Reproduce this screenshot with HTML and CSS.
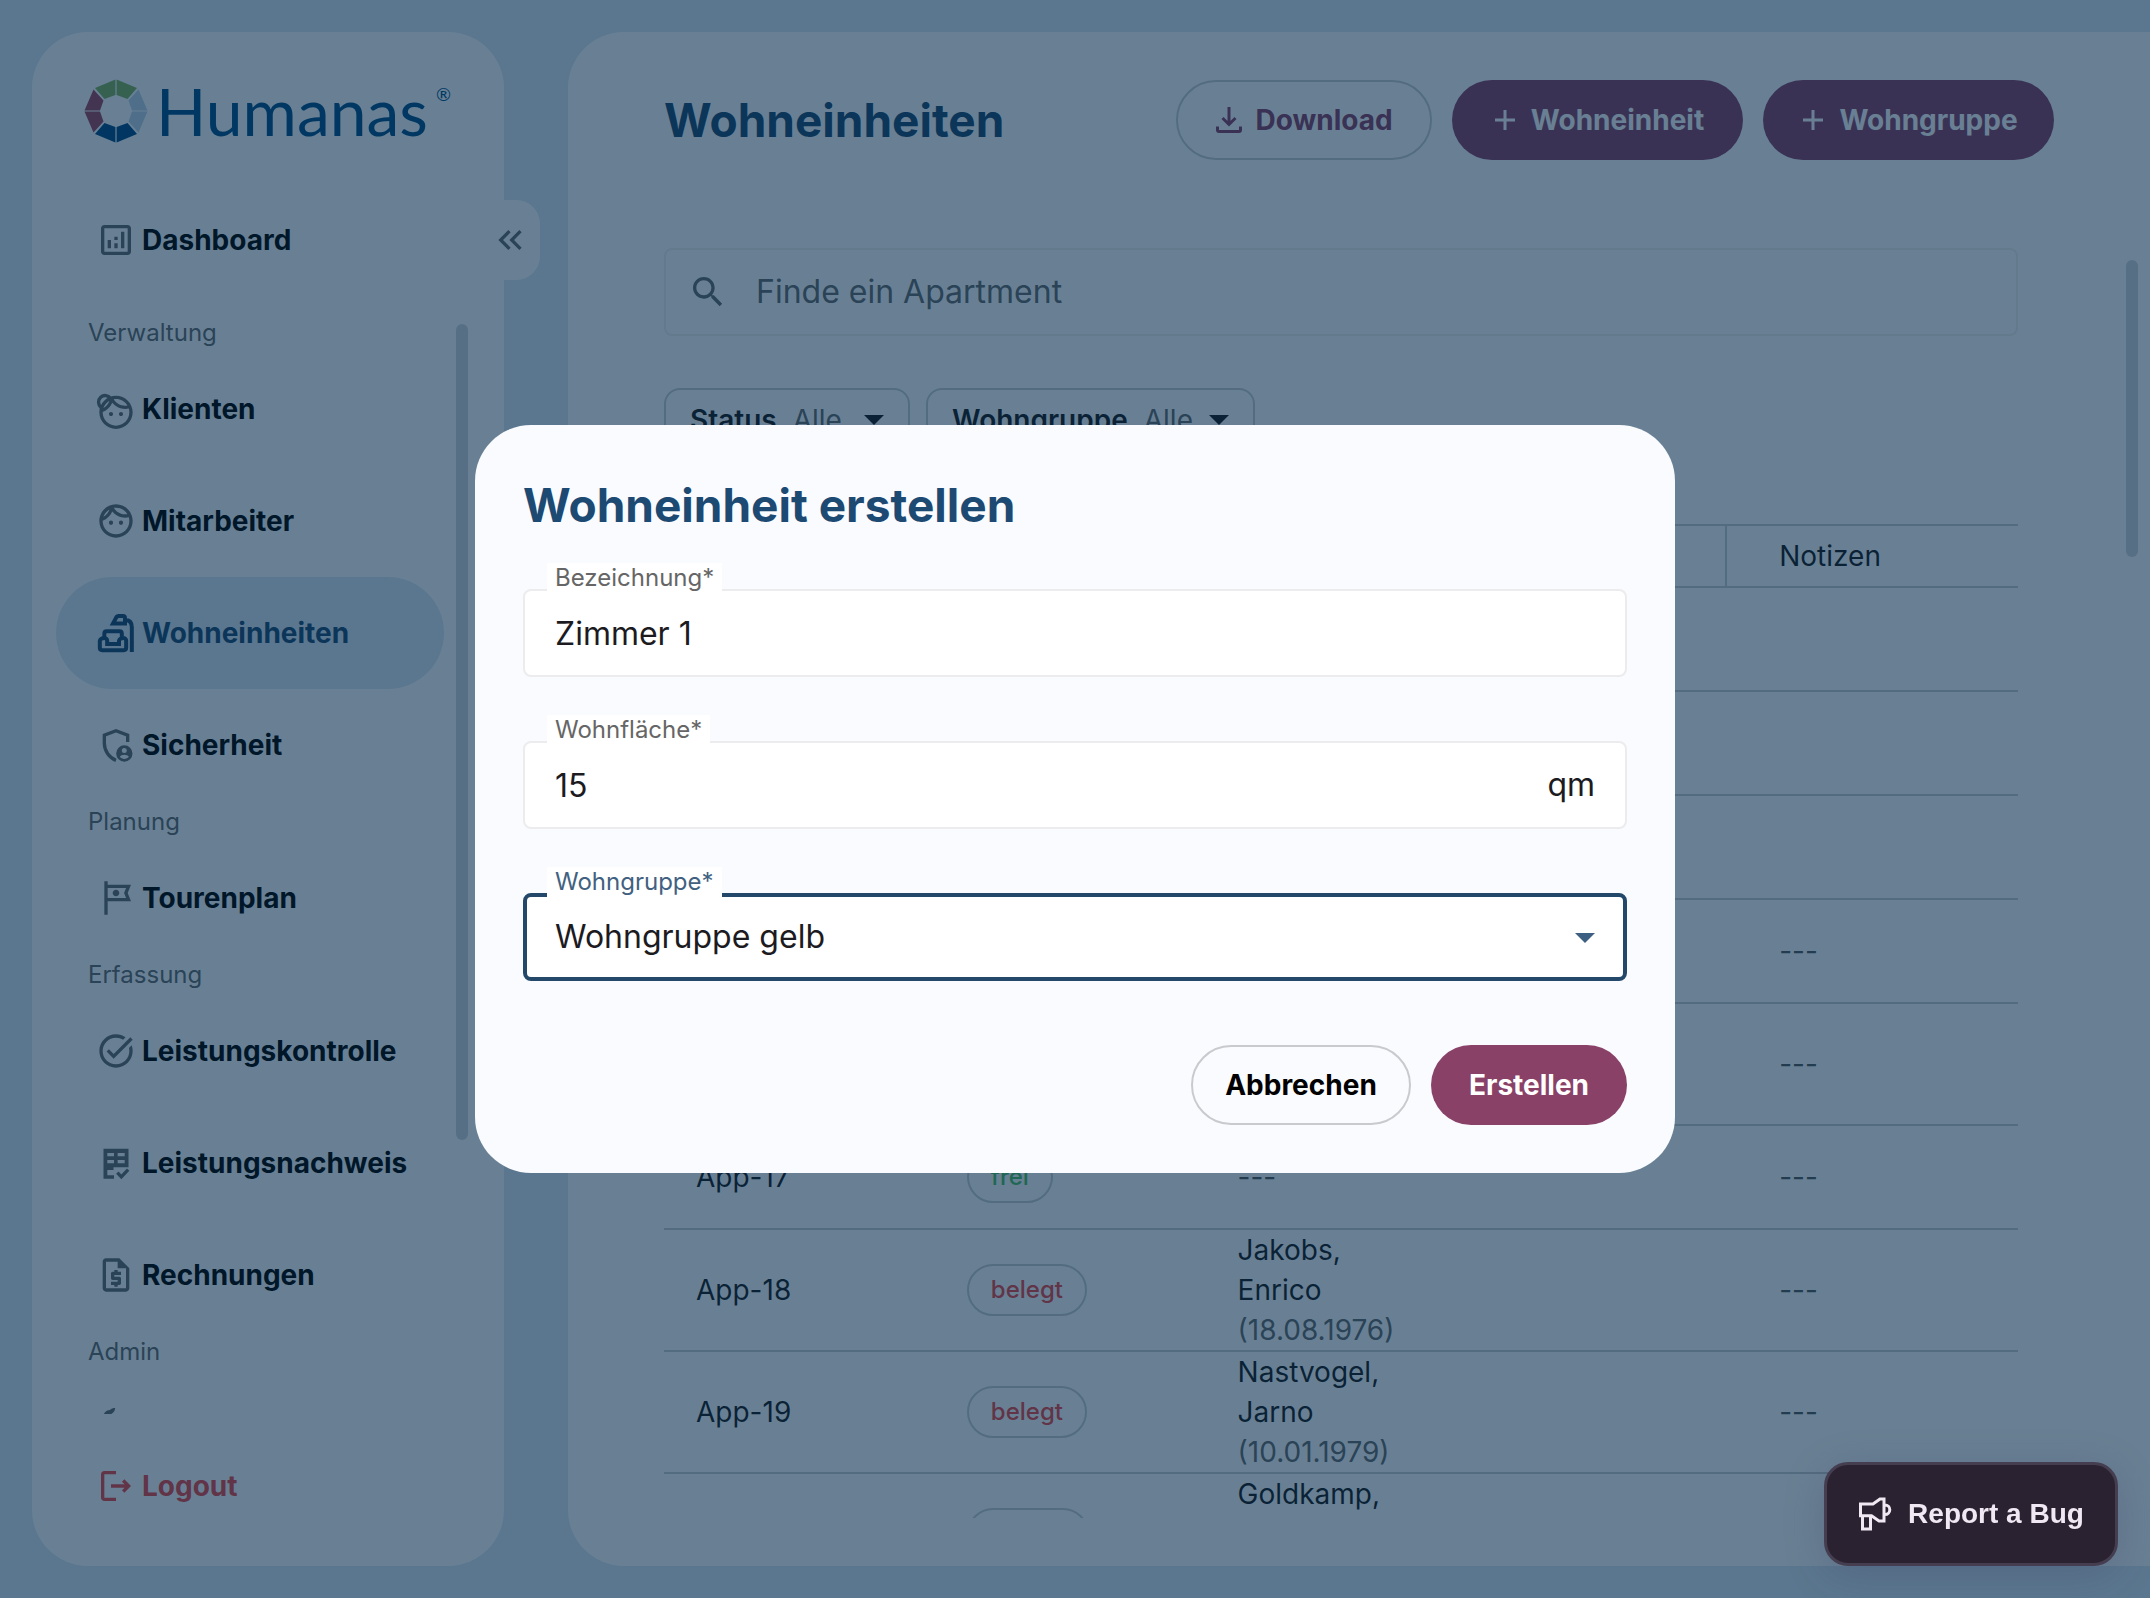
FILE: index.html
```html
<!DOCTYPE html>
<html lang="de">
<head>
<meta charset="utf-8">
<meta name="viewport" content="width=device-width, initial-scale=1">
<title>Humanas – Wohneinheiten</title>
<link rel="stylesheet" href="styles.css">
</head>
<body>
<div class="app">
  <aside class="sidebar">
    <a class="logo" href="#" aria-label="Humanas">
      <svg class="logo-ring" viewBox="0 0 64 64" aria-hidden="true">
        <path class="ring-green" d="M32.600.5 53 9 43.500 20 32.600 16zM31.400.5 11 9l9.500 11L31.400 16z"/>
        <path class="ring-sky" d="M54.500 10.500 63.500 31.400H48L44.500 21.500zM54.500 53.500 63.500 32.600H48L44.500 42.500z"/>
        <path class="ring-navy" d="M32.600 63.500 53 55 43.500 44 32.600 48zM31.400 63.500 11 55l9.500-11L31.400 48z"/>
        <path class="ring-wine" d="M9.500 10.500.5 31.400H16L19.500 21.500zM9.500 53.500.5 32.600H16L19.500 42.500z"/>
      </svg>
      <span class="logo-name">Humanas</span><span class="logo-mark">®</span>
    </a>
    <a class="nav-item" href="#">
      <svg class="icon" viewBox="0 0 24 24"><path d="M19 3H5c-1.100 0-2 .9-2 2v14c0 1.100.9 2 2 2h14c1.100 0 2-.9 2-2V5c0-1.100-.9-2-2-2zm0 16H5V5h14v14zM7 12h2v5H7zM15 7h2v10h-2zM11 14h2v3h-2zM11 10h2v2h-2z"/></svg>
      Dashboard
    </a>
    <button class="collapse" type="button" aria-label="Menü einklappen">
      <svg class="icon" viewBox="0 0 24 24"><path d="M17.590 18 19 16.590 14.420 12 19 7.410 17.590 6l-6 6zM11 18l1.410-1.410L7.830 12l4.580-4.590L11 6l-6 6z"/></svg>
    </button>
    <nav class="nav-scroll">
      <h2 class="nav-label">Verwaltung</h2>
      <a class="nav-item" href="#">
        <svg class="icon" viewBox="0 0 24 24"><g transform="translate(0 2)"><path d="M10.250 13c0 .69-.56 1.250-1.250 1.250S7.750 13.690 7.750 13s.56-1.250 1.250-1.250 1.250.56 1.250 1.250zM15 11.750c-.69 0-1.250.56-1.250 1.250s.56 1.250 1.250 1.250 1.250-.56 1.250-1.250-.56-1.250-1.250-1.250zm7 .25c0 5.520-4.480 10-10 10S2 17.520 2 12 6.480 2 12 2s10 4.480 10 10zM10.660 4.120C12.060 6.440 14.600 8 17.500 8c.46 0 .91-.05 1.340-.12C17.440 5.560 14.900 4 12 4c-.46 0-.91.05-1.340.12zM4.420 9.470c1.710-.97 3.030-2.550 3.660-4.440C6.370 6 5.050 7.580 4.420 9.470zM20 12c0-.78-.12-1.530-.33-2.240-.7.15-1.420.24-2.170.24-3.130 0-5.920-1.440-7.760-3.690C8.690 8.870 6.600 10.880 4 11.860c.01.04 0 .09 0 .14 0 4.410 3.590 8 8 8s8-3.590 8-8z"/></g><path class="line" d="M3 11A4 4 0 1 1 8.800 5.600"/></svg>
        Klienten
      </a>
      <a class="nav-item" href="#">
        <svg class="icon" viewBox="0 0 24 24"><path d="M10.250 13c0 .69-.56 1.250-1.250 1.250S7.750 13.690 7.750 13s.56-1.250 1.250-1.250 1.250.56 1.250 1.250zM15 11.750c-.69 0-1.250.56-1.250 1.250s.56 1.250 1.250 1.250 1.250-.56 1.250-1.250-.56-1.250-1.250-1.250zm7 .25c0 5.520-4.480 10-10 10S2 17.520 2 12 6.480 2 12 2s10 4.480 10 10zM10.660 4.120C12.060 6.440 14.600 8 17.500 8c.46 0 .91-.05 1.340-.12C17.440 5.560 14.900 4 12 4c-.46 0-.91.05-1.340.12zM4.420 9.470c1.710-.97 3.030-2.550 3.660-4.440C6.370 6 5.050 7.580 4.420 9.470zM20 12c0-.78-.12-1.530-.33-2.240-.7.15-1.420.24-2.170.24-3.130 0-5.920-1.440-7.760-3.690C8.690 8.870 6.600 10.880 4 11.860c.01.04 0 .09 0 .14 0 4.410 3.590 8 8 8s8-3.590 8-8z"/></svg>
        Mitarbeiter
      </a>
      <a class="nav-item active" href="#" aria-current="page">
        <svg class="icon" viewBox="0 0 24 24"><path class="line" d="M10.200 6.300h7.200V3c0-.8-.5-1.200-1.200-1.200h-2.600c-.8 0-1.200.3-1.500 1zM17.400 4.200c2.800 0 4.100 1.400 4.100 4.300v14.900M5 15v-2.600c0-.9.500-1.400 1.400-1.400h7.700c.9 0 1.400.5 1.400 1.400V15M6.700 18.600v-1.900c0-1-.8-1.700-1.800-1.700s-2.600.7-2.600 1.700v4.200c0 .9.500 1.400 1.400 1.400h13c.9 0 1.400-.5 1.400-1.400v-4.200c0-1-.8-1.700-1.800-1.700s-2.500.7-2.500 1.700v1.900z"/></svg>
        Wohneinheiten
      </a>
      <a class="nav-item" href="#">
        <svg class="icon" viewBox="0 0 24 24"><path class="line" d="M19 10.200V6.100l-7-2.700-7 2.700V11c0 4.600 3 8.700 7 10.200"/><path fill-rule="evenodd" d="M17 12.200a4.900 4.900 0 1 0 0 9.800 4.900 4.900 0 0 0 0-9.800zm0 1.600a1.500 1.500 0 1 1 0 3 1.500 1.500 0 0 1 0-3zm0 6.600c-1.100 0-2-.5-2.700-1.300.3-.8 1.700-1.300 2.700-1.300s2.400.5 2.700 1.300c-.7.8-1.600 1.300-2.700 1.300z"/></svg>
        Sicherheit
      </a>
      <h2 class="nav-label">Planung</h2>
      <a class="nav-item" href="#">
        <svg class="icon" viewBox="0 0 24 24"><path d="M21 4H7V2H5v20h2v-8h14l-2-5 2-5zm-3.860 5.740L18.050 12H7V6h11.050l-.91 2.260-.3.740.3.740zM14 9c0 1.100-.9 2-2 2s-2-.9-2-2 .9-2 2-2 2 .9 2 2z"/></svg>
        Tourenplan
      </a>
      <h2 class="nav-label">Erfassung</h2>
      <a class="nav-item" href="#">
        <svg class="icon" viewBox="0 0 24 24"><path d="M22 5.180 10.590 16.600l-4.240-4.240 1.410-1.410 2.830 2.830 10-10L22 5.180zM19.790 10.220c.13.57.21 1.170.21 1.780 0 4.420-3.580 8-8 8s-8-3.580-8-8 3.580-8 8-8c1.580 0 3.040.46 4.280 1.250l1.440-1.440C16.100 2.670 14.130 2 12 2 6.480 2 2 6.480 2 12s4.480 10 10 10 10-4.480 10-10c0-1.190-.22-2.330-.6-3.390l-1.610 1.610z"/></svg>
        Leistungskontrolle
      </a>
      <a class="nav-item" href="#">
        <svg class="icon" viewBox="0 0 24 24"><path fill-rule="evenodd" d="M4.500 3.400h15v11.200h-9v1.600H6.800v3.200h4v2H4.500zM6.800 6v1.900h4V6zM13 6v1.900h4.200V6zM6.800 10.200v1.900h4v-1.900zM13 10.200v1.900h4.200v-1.900z"/><path class="line" d="m12.800 17.800 2.400 2.500 4.100-4.300"/></svg>
        Leistungsnachweis
      </a>
      <a class="nav-item" href="#">
        <svg class="icon" viewBox="0 0 24 24"><path d="M14 2H6c-1.100 0-1.990.9-1.990 2L4 20c0 1.100.89 2 1.990 2H18c1.100 0 2-.9 2-2V8l-6-6zM6 20V4h7v4h5v12H6zm5-1h2v-1h1c.55 0 1-.45 1-1v-3c0-.55-.45-1-1-1h-3v-1h4v-2h-2V9h-2v1h-1c-.55 0-1 .45-1 1v3c0 .55.45 1 1 1h3v1H9v2h2v1z"/></svg>
        Rechnungen
      </a>
      <h2 class="nav-label">Admin</h2>
      <a class="nav-item" href="#" aria-label="Einstellungen">
        <svg class="icon" viewBox="0 0 24 24"><path d="M4.600 4C5.200 2 6.800 1.200 8.400 1.200 9.200.4 10.200 0 11.500 0c0 1.800-1.300 3.200-3 4z"/></svg>
      </a>
    </nav>
    <div class="thumb nav-thumb"></div>
    <a class="nav-item logout" href="#">
      <svg class="icon" viewBox="0 0 24 24"><path d="M5 5h7V3H5c-1.100 0-2 .9-2 2v14c0 1.100.9 2 2 2h7v-2H5V5zM21 12l-4-4-1.410 1.410L17.170 11H9v2h8.170l-1.580 1.580L17 16l4-4z"/></svg>
      Logout
    </a>
  </aside>

  <main class="main">
    <header class="page-head">
      <h1>Wohneinheiten</h1>
      <button class="btn outline download" type="button">
        <svg class="btn-icon" viewBox="0 0 28 28"><path d="M14 1v17M7.500 12 14 18.500 20.500 12M2.500 20.500V24c0 1 .6 1.500 1.500 1.500h20c.9 0 1.500-.5 1.500-1.500v-3.500"/></svg>
        Download
      </button>
      <button class="btn filled add" type="button">
        <svg class="btn-icon" viewBox="0 0 28 28"><path d="M14 4v20M4 14h20"/></svg>
        Wohneinheit
      </button>
      <button class="btn filled add" type="button">
        <svg class="btn-icon" viewBox="0 0 28 28"><path d="M14 4v20M4 14h20"/></svg>
        Wohngruppe
      </button>
    </header>
    <div class="content">
      <label class="search">
        <svg class="icon" viewBox="0 0 24 24"><path d="M15.500 14h-.79l-.28-.27C15.410 12.590 16 11.110 16 9.500 16 5.910 13.090 3 9.500 3S3 5.910 3 9.500 5.910 16 9.500 16c1.610 0 3.090-.59 4.230-1.570l.27.28v.79l5 4.990L20.490 19l-4.990-5zm-6 0C7.010 14 5 11.990 5 9.500S7.010 5 9.500 5 14 7.010 14 9.500 11.990 14 9.500 14z"/></svg>
        <input type="search" placeholder="Finde ein Apartment" aria-label="Finde ein Apartment">
      </label>
      <div class="filters">
        <button class="chip chip-status" type="button"><b>Status</b> <span>Alle</span><i class="caret"></i></button>
        <button class="chip chip-group" type="button"><b>Wohngruppe</b> <span>Alle</span><i class="caret"></i></button>
      </div>
      <table class="units">
        <thead><tr><th></th><th></th><th></th><th></th><th class="notes">Notizen</th></tr></thead>
        <tbody>
          <tr><td></td><td></td><td></td><td></td><td></td></tr>
          <tr><td></td><td></td><td></td><td></td><td></td></tr>
          <tr><td></td><td></td><td></td><td></td><td></td></tr>
          <tr><td></td><td></td><td></td><td></td><td class="none">---</td></tr>
          <tr class="tall"><td></td><td></td><td></td><td></td><td class="none">---</td></tr>
          <tr><td>App-17</td><td><span class="badge free">frei</span></td><td class="none">---</td><td></td><td class="none">---</td></tr>
          <tr class="tall"><td>App-18</td><td><span class="badge taken">belegt</span></td><td>Jakobs,<br>Enrico<br><small>(18.08.1976)</small></td><td></td><td class="none">---</td></tr>
          <tr class="tall"><td>App-19</td><td><span class="badge taken">belegt</span></td><td>Nastvogel,<br>Jarno<br><small>(10.01.1979)</small></td><td></td><td class="none">---</td></tr>
          <tr class="tall"><td></td><td><span class="badge blank"></span></td><td class="top">Goldkamp,</td><td></td><td></td></tr>
        </tbody>
      </table>
    </div>
    <div class="thumb main-thumb"></div>
  </main>
</div>

<div class="scrim">
  <form class="dialog" role="dialog" aria-modal="true" aria-labelledby="dialog-title">
    <h2 id="dialog-title">Wohneinheit erstellen</h2>
    <div class="field">
      <label for="name">Bezeichnung*</label>
      <input id="name" type="text" value="Zimmer 1">
    </div>
    <div class="field">
      <label for="area">Wohnfläche*</label>
      <input id="area" type="text" value="15">
      <span class="unit">qm</span>
    </div>
    <div class="field focused">
      <label for="group">Wohngruppe*</label>
      <select id="group"><option>Wohngruppe gelb</option></select>
      <i class="caret"></i>
    </div>
    <div class="actions">
      <button class="btn outline cancel" type="button">Abbrechen</button>
      <button class="btn filled submit" type="submit">Erstellen</button>
    </div>
  </form>
</div>

<button class="bug" type="button">
  <svg viewBox="0 0 34 34" aria-hidden="true"><path d="M2.500 7H15l7-5h4v22h-5l-7.500-5.300h-11zM4.500 19v13h8V19M27 8a4.800 4.800 0 0 1 0 9.600"/></svg>
  Report a Bug
</button>
</body>
</html>
```
FILE: styles.css
```css
:root {
  --page: #d9e4f2;
  --surface: #f9fbff;
  --navy: #1d4a73;
  --wine: #8a4168;
  --muted: #67696d;
  --outline: #c8cacd;
  --text: #1c1b1f;
  --sans: "Inter", "Open Sans", sans-serif;
}

* { box-sizing: border-box; }

body {
  margin: 0;
  height: 100vh;
  overflow: hidden;
  background: var(--page);
  color: var(--text);
  font: 400 28px/40px var(--sans);
}

button, input, select { font: inherit; color: inherit; }
a { color: inherit; text-decoration: none; }
h1, h2 { margin: 0; }

.app {
  display: flex;
  gap: 64px;
  height: 100vh;
  padding: 32px 0 32px 32px;
}

/* Sidebar */
.sidebar {
  position: relative;
  display: flex;
  flex-direction: column;
  flex: 0 0 472px;
  background: var(--surface);
  border-radius: 56px;
}

.logo {
  display: flex;
  align-items: center;
  gap: 8px;
  height: 152px;
  padding: 6px 0 0 52px;
  color: #00508a;
}
.logo-ring { width: 64px; height: 64px; }
.ring-green { fill: #80b060; }
.ring-sky { fill: #bccfe6; }
.ring-navy { fill: #004a86; }
.ring-wine { fill: #a0455f; }
.logo-name { font: 400 66px/80px "Lato", sans-serif; }
.logo-mark { align-self: flex-start; padding-top: 44px; font: 400 18px/24px "Lato", sans-serif; }

.icon { flex: none; width: 40px; height: 40px; fill: var(--muted); }
.icon .line { fill: none; stroke: var(--muted); stroke-width: 2; }

.nav-item {
  display: flex;
  flex: none;
  align-items: center;
  gap: 6px;
  height: 112px;
  margin: 0 60px 0 24px;
  padding-left: 40px;
  border-radius: 56px;
  color: #000;
  font-weight: 700;
}
.nav-item.active { background: var(--page); color: var(--navy); }
.active .icon .line { stroke: var(--navy); stroke-width: 2.4; }

.nav-scroll { flex: 1; min-height: 0; margin-top: 16px; overflow: hidden; }
.nav-label {
  padding-left: 56px;
  color: var(--muted);
  font-weight: 400;
  font-size: 24px;
  line-height: 41px;
}
.logout { margin-top: 16px; margin-bottom: 24px; color: #e8474a; }
.logout .icon { fill: #e8474a; }

.collapse {
  position: absolute;
  top: 168px;
  right: -36px;
  width: 80px;
  height: 80px;
  padding: 0 0 0 30px;
  border: 0;
  border-radius: 0 24px 24px 0;
  background: var(--surface);
}
.collapse .icon { display: block; }

.thumb { position: absolute; width: 12px; border-radius: 6px; background: #cfd2d8; }
.nav-thumb { top: 292px; right: 36px; height: 816px; }
.main-thumb { top: 228px; right: 12px; height: 297px; }

/* Main panel */
.main {
  position: relative;
  display: flex;
  flex: 1;
  flex-direction: column;
  min-width: 0;
  padding: 48px 96px 48px 96px;
  background: var(--surface);
  border-radius: 56px 0 0 56px;
}
.page-head { display: flex; align-items: center; gap: 20px; }
h1 {
  flex: 1;
  color: var(--navy);
  font-weight: 700;
  font-size: 46px;
  line-height: 56px;
}

.btn {
  display: flex;
  align-items: center;
  justify-content: center;
  gap: 12px;
  height: 80px;
  border: 0;
  border-radius: 40px;
  font-weight: 700;
}
.btn.outline { border: 2px solid var(--outline); background: transparent; }
.btn.filled { background: var(--wine); color: var(--surface); }
.btn-icon { width: 28px; height: 28px; fill: none; stroke: currentColor; stroke-width: 3; }
.btn.download { width: 256px; color: var(--wine); }
.btn.add { width: 291px; }

.content { flex: 1; min-height: 0; margin-top: 88px; padding-right: 36px; overflow: hidden; }

.search {
  display: flex;
  align-items: center;
  gap: 28px;
  height: 88px;
  padding: 0 22px;
  border: 2px solid #ececef;
  border-radius: 8px;
}
.search input { flex: 1; padding: 0; border: 0; outline: 0; background: none; font-size: 32px; }
.search input::placeholder { color: var(--muted); opacity: 1; }

.filters { display: flex; gap: 16px; margin-top: 52px; }
.chip {
  display: flex;
  align-items: center;
  gap: 16px;
  height: 64px;
  padding: 0 24px;
  border: 2px solid var(--outline);
  border-radius: 16px;
  background: none;
}
.chip b { font-weight: 600; }
.chip span { color: var(--muted); }
.chip .caret { margin-left: auto; }
.chip-status { width: 246px; }
.chip-group { width: 329px; }
.caret {
  border: 10px solid transparent;
  border-top-color: currentColor;
  border-bottom: 0;
}

.units {
  width: 100%;
  margin-top: 72px;
  border-collapse: collapse;
  table-layout: fixed;
}
.units th, .units td {
  height: 104px;
  padding: 0 0 0 32px;
  border-bottom: 2px solid var(--outline);
  text-align: left;
  font-weight: 400;
}
.units th { height: 62px; border-top: 2px solid var(--outline); }
.units .tall td { height: 122px; }
.units .top { vertical-align: top; }
.units .none { color: #55585c; }
.units small { color: var(--muted); font-size: 28px; }
.notes { position: relative; }
.notes::before {
  content: "";
  position: absolute;
  top: 0;
  bottom: 0;
  left: -22px;
  width: 2px;
  background: var(--outline);
}
.badge {
  display: inline-block;
  height: 52px;
  padding: 0 22px;
  border: 2px solid var(--outline);
  border-radius: 26px;
  font-weight: 500;
  font-size: 24px;
  line-height: 48px;
  vertical-align: middle;
}
.free { color: #4cbf68; }
.taken { color: #e8474a; }
.blank { width: 122px; }

/* Dialog */
.scrim {
  position: fixed;
  inset: 0;
  display: grid;
  place-items: center;
  background: rgba(0, 39, 71, .58);
}
.dialog {
  width: 1200px;
  max-width: 90vw;
  padding: 48px;
  border-radius: 56px;
  background: #f9fbff;
}
.dialog h2 {
  margin-bottom: 52px;
  color: var(--navy);
  font-weight: 700;
  font-size: 46px;
  line-height: 64px;
}
.field { position: relative; display: flex; margin-bottom: 64px; }
.field label {
  position: absolute;
  top: -26px;
  left: 24px;
  padding: 0 8px;
  background: #fff;
  color: #666;
  font-size: 24px;
  line-height: 30px;
}
.field input, .field select {
  width: 100%;
  height: 88px;
  padding: 0 30px;
  border: 2px solid #ececef;
  border-radius: 8px;
  outline: 0;
  background: #fff;
  appearance: none;
  font-size: 32px;
}
.focused select { padding: 0 28px; border: 4px solid #24486a; }
.focused label { color: #426181; }
.unit, .field .caret { position: absolute; right: 32px; top: 24px; font-size: 32px; }
.field .caret { top: 40px; color: #3d6082; }

.actions { display: flex; justify-content: flex-end; gap: 20px; }
.dialog .btn { color: #000; }
.dialog .btn.filled { color: #fff; }
.cancel { width: 220px; }
.submit { width: 196px; }

/* Feedback button */
.bug {
  position: fixed;
  right: 32px;
  bottom: 32px;
  display: flex;
  align-items: center;
  justify-content: center;
  gap: 16px;
  width: 294px;
  height: 104px;
  border: 3px solid #453e50;
  border-radius: 24px;
  background: #2a2230;
  color: #f0e8f2;
  font: 700 28px/40px "Liberation Sans", Arial, sans-serif;
  box-shadow: 0 8px 40px rgba(60, 50, 90, .24);
}
.bug svg { width: 34px; height: 34px; fill: none; stroke: currentColor; stroke-width: 3; }
```
